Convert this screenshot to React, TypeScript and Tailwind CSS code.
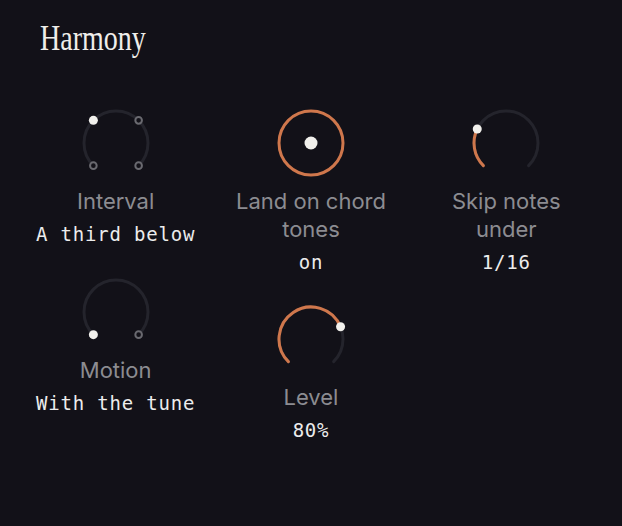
import React from 'react';

const ORANGE = '#cf774c';
const TRACK = '#24242c';
const START = -135;
const END = 135;
const R = 32;
const C = 36;

// angle is measured clockwise from 12 o'clock
const pt = (deg: number, r = R) => {
  const a = (deg * Math.PI) / 180;
  return { x: C + r * Math.sin(a), y: C - r * Math.cos(a) };
};

const arc = (from: number, to: number) => {
  const a = pt(from);
  const b = pt(to);
  const large = to - from > 180 ? 1 : 0;
  return `M ${a.x} ${a.y} A ${R} ${R} 0 ${large} 1 ${b.x} ${b.y}`;
};

interface StepKnobProps {
  steps: number;
  selected: number;
}

const StepKnob: React.FC<StepKnobProps> = ({ steps, selected }) => {
  const dots = Array.from({ length: steps }, (_, i) => START + ((END - START) * i) / (steps - 1));
  return (
    <svg width="72" height="72" viewBox="0 0 72 72">
      <path d={arc(START, END)} fill="none" stroke={TRACK} strokeWidth="3" strokeLinecap="round" />
      {dots.map((deg, i) => {
        const p = pt(deg);
        return i === selected ? (
          <circle key={i} cx={p.x} cy={p.y} r="4.5" fill="#f1f0ec" />
        ) : (
          <circle key={i} cx={p.x} cy={p.y} r="3.3" fill="#121118" stroke="#6a6a70" strokeWidth="2" />
        );
      })}
    </svg>
  );
};

const ValueKnob: React.FC<{ angle: number }> = ({ angle }) => {
  const p = pt(angle);
  return (
    <svg width="72" height="72" viewBox="0 0 72 72">
      <path d={arc(START, END)} fill="none" stroke={TRACK} strokeWidth="3" strokeLinecap="round" />
      <path d={arc(START, angle)} fill="none" stroke={ORANGE} strokeWidth="3" strokeLinecap="round" />
      <circle cx={p.x} cy={p.y} r="4.5" fill="#f1f0ec" />
    </svg>
  );
};

const Toggle: React.FC = () => (
  <svg width="72" height="72" viewBox="0 0 72 72">
    <circle cx={C} cy={C} r={R} fill="none" stroke={ORANGE} strokeWidth="3" />
    <circle cx={C} cy={C} r="6.5" fill="#f1f0ec" />
  </svg>
);

const Cell: React.FC<{ control: React.ReactNode; label: string; value: string }> = ({
  control,
  label,
  value,
}) => (
  <div className="flex flex-col items-center">
    {control}
    <div className="mt-[8px] max-w-[170px] text-center text-[22px] leading-[28px] text-[#8c8c91] font-['Inter','Noto_Sans',sans-serif]">
      {label}
    </div>
    <div className="mt-[7px] text-[19px] leading-[24px] tracking-[0.8px] text-[#ececec] whitespace-nowrap font-['DejaVu_Sans_Mono',monospace]">
      {value}
    </div>
  </div>
);

export default function App() {
  return (
    <div className="w-[622px] h-[526px] bg-[#121118] overflow-hidden">
      <div className="pt-[21px] pl-[40px]">
        <h1 className="origin-left scale-x-[0.8] text-[35px] leading-[35px] text-[#efeeea] font-['Liberation_Serif',serif] whitespace-nowrap">
          Harmony
        </h1>
      </div>
      <div className="mt-[51px] px-[18px] grid grid-cols-3">
        <div className="flex flex-col gap-[30px]">
          <Cell control={<StepKnob steps={4} selected={1} />} label="Interval" value="A third below" />
          <Cell control={<StepKnob steps={2} selected={0} />} label="Motion" value="With the tune" />
        </div>
        <div className="flex flex-col gap-[29px]">
          <Cell control={<Toggle />} label="Land on chord tones" value="on" />
          <Cell control={<ValueKnob angle={67.5} />} label="Level" value="80%" />
        </div>
        <div className="flex flex-col">
          <Cell control={<ValueKnob angle={-64} />} label="Skip notes under" value="1/16" />
        </div>
      </div>
    </div>
  );
}
